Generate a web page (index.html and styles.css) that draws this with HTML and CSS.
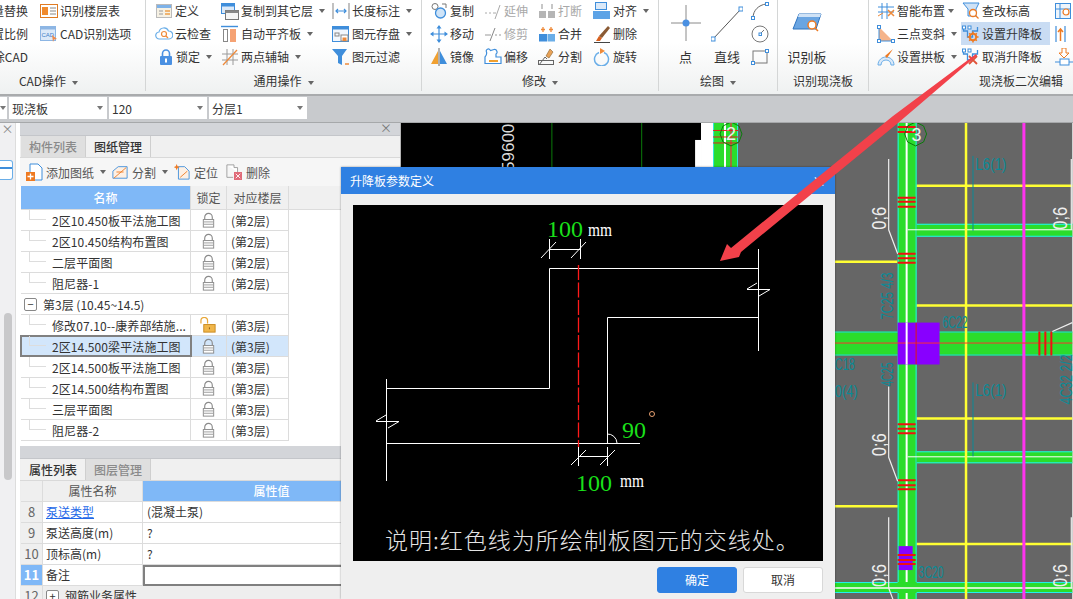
FILE: index.html
```html
<!DOCTYPE html>
<html>
    <head>
        <meta name="viewport" content="width=device-width, initial-scale=1">
        <meta charset="UTF-8">
        <title>升降板参数定义</title>
        <link rel="stylesheet" href="styles.css">
    </head>
    <body>
        <svg class="sprite">
            <defs>
                <g id="lock">
                    <path d="M5 8V5.500a4 4 0 0 1 8 0V8" fill="none" stroke="#8a8a8a" stroke-width="1.200"/>
                    <rect x="3.500" y="8" width="11" height="8" fill="#fff" stroke="#8a8a8a"/>
                    <path d="M4 10.500h10M4 13h10" stroke="#9a9a9a"/>
                </g>
                <g id="lift">
                    <path d="M1.500 2v4h4v6h5V6h5V2" fill="none" stroke="#3f8edb" stroke-width="1.300"/>
                    <rect x="0.500" y="1" width="3" height="3" fill="#fff" stroke="#3f8edb"/>
                    <rect x="6" y="1" width="3" height="3" fill="#fff" stroke="#3f8edb"/>
                </g>
            </defs>
        </svg>

        <div class="ribbon">
            <div class="group group-cad">
                <div class="group-body">
                    <div class="col col-cut">
                        <div class="item">批量替换</div>
                        <div class="item">设置比例</div>
                        <div class="item">清除CAD</div>
                    </div>
                    <div class="col">
                        <div class="item">
                            <svg class="ic" viewBox="0 0 18 18"><rect x="0.500" y="2.500" width="17" height="13" fill="#fff" stroke="#e07b22"/><rect x="2" y="5" width="6" height="8" fill="#f08a2c"/><path d="M10 6h6M10 9h6M10 12h6" stroke="#888"/></svg>
                            <span>识别楼层表</span>
                        </div>
                        <div class="item">
                            <svg class="ic" viewBox="0 0 18 18"><rect x="0.500" y="1.500" width="15" height="14" fill="#dce9f8" stroke="#8db6e4"/><rect x="0.500" y="1.500" width="15" height="3" fill="#8db6e4"/><text x="1.500" y="12" class="ic-text">CAD</text><path d="M12 10l5 4-3 .5-1 2.500z" fill="#f08a4a"/></svg>
                            <span>CAD识别选项</span>
                        </div>
                    </div>
                </div>
                <div class="group-label">CAD操作<i class="caret"></i></div>
            </div>

            <div class="group group-common">
                <div class="group-body">
                    <div class="col w66">
                        <div class="item">
                            <svg class="ic" viewBox="0 0 18 18"><rect x="1.500" y="2.500" width="15" height="13" fill="#f6f1e4" stroke="#bbb"/><rect x="2" y="3" width="14" height="3" fill="#7eb2e8"/><path d="M4 9h4M4 12h4" stroke="#999"/><path d="M10 9h5M10 12h5" stroke="#eda04a" stroke-width="1.500"/></svg>
                            <span>定义</span>
                        </div>
                        <div class="item">
                            <svg class="ic" viewBox="0 0 18 18"><path d="M4.500 14a3.500 3.500 0 0 1-.5-7 5 5 0 0 1 9.500-1 4 4 0 0 1 .5 8z" fill="#fff" stroke="#6aaee8" stroke-width="1.200"/><circle cx="9" cy="9" r="2.500" fill="none" stroke="#ee8a3a" stroke-width="1.200"/><path d="M11 11l2 2" stroke="#ee8a3a" stroke-width="1.200"/></svg>
                            <span>云检查</span>
                        </div>
                        <div class="item item-indent">
                            <svg class="ic ic-narrow" viewBox="0 0 14 18"><path d="M3.500 8V5.500a3.500 3.500 0 0 1 7 0V8" fill="none" stroke="#4a90e2" stroke-width="1.600"/><rect x="1" y="8" width="12" height="9" rx="1" fill="#4a90e2"/><rect x="6" y="10.500" width="2" height="4" fill="#fff"/></svg>
                            <span>锁定</span><i class="caret"></i>
                        </div>
                    </div>
                    <div class="col w111">
                        <div class="item">
                            <svg class="ic" viewBox="0 0 18 18"><rect x="0.500" y="1.500" width="13" height="10" fill="#dbe9f8" stroke="#3f8edb"/><rect x="0.500" y="1.500" width="13" height="3" fill="#3f8edb"/><rect x="4.500" y="8.500" width="13" height="9" fill="#f5f5f5" stroke="#777"/><rect x="4.500" y="8.500" width="13" height="2.500" fill="#888"/></svg>
                            <span>复制到其它层</span><i class="caret"></i>
                        </div>
                        <div class="item">
                            <svg class="ic" viewBox="0 0 18 18"><path d="M0 1.500h17" stroke="#3f8edb" stroke-width="1.400"/><rect x="2.500" y="4.500" width="4" height="12" fill="#fff" stroke="#888"/><rect x="9" y="4" width="6" height="13" fill="#f5a273"/></svg>
                            <span>自动平齐板</span><i class="caret"></i>
                        </div>
                        <div class="item">
                            <svg class="ic" viewBox="0 0 18 18"><path d="M1 6h16M1 12h16M6 1v16M12 1v16" stroke="#9a9a9a"/><path d="M2 17L16 2" stroke="#ee8a3a" stroke-width="1.300"/></svg>
                            <span>两点辅轴</span><i class="caret"></i>
                        </div>
                    </div>
                    <div class="col">
                        <div class="item">
                            <svg class="ic" viewBox="0 0 18 18"><path d="M1 1v16M17 1v16" stroke="#999" stroke-width="1.200"/><path d="M4 9h10M6 7L4 9l2 2M12 7l2 2-2 2" fill="none" stroke="#3f8edb" stroke-width="1.200"/></svg>
                            <span>长度标注</span><i class="caret"></i>
                        </div>
                        <div class="item">
                            <svg class="ic" viewBox="0 0 18 18"><rect x="0.500" y="1.500" width="16" height="15" fill="#f2f7fd" stroke="#3f8edb"/><rect x="0.500" y="1.500" width="16" height="3" fill="#3f8edb"/><rect x="3" y="8" width="4" height="3" fill="none" stroke="#888"/><rect x="9" y="10" width="7" height="6" fill="#fff" stroke="#888"/><rect x="10.500" y="12.500" width="4" height="3.500" fill="#ee8a3a"/></svg>
                            <span>图元存盘</span><i class="caret"></i>
                        </div>
                        <div class="item">
                            <svg class="ic" viewBox="0 0 18 18"><path d="M0 1h15l-5 7v9l-4-2V8z" fill="#3f8edb"/><path d="M13 16h4" stroke="#ee8a3a" stroke-width="1.500"/></svg>
                            <span>图元过滤</span>
                        </div>
                    </div>
                </div>
                <div class="group-label">通用操作<i class="caret"></i></div>
            </div>

            <div class="group group-modify">
                <div class="group-body">
                    <div class="col w54">
                        <div class="item">
                            <svg class="ic" viewBox="0 0 18 18"><circle cx="5" cy="4.500" r="3" fill="#fff" stroke="#777"/><circle cx="10.500" cy="11" r="5" fill="#cfe4f8" stroke="#3f8edb" stroke-width="1.300"/><path d="M12 2h4v4" fill="none" stroke="#777"/></svg>
                            <span>复制</span>
                        </div>
                        <div class="item">
                            <svg class="ic" viewBox="0 0 18 18"><path d="M9 1v16M1 9h16" stroke="#3f8edb" stroke-width="1.200"/><path d="M9 0l-2.500 3.500h5zM9 18l-2.500-3.500h5zM0 9l3.500-2.500v5zM18 9l-3.500-2.500v5z" fill="#3f8edb"/></svg>
                            <span>移动</span>
                        </div>
                        <div class="item">
                            <svg class="ic" viewBox="0 0 18 18"><path d="M8 3v13H1z" fill="#f0a030"/><path d="M10 3v13h7z" fill="#3f8edb"/><path d="M9 0v18" stroke="#666"/></svg>
                            <span>镜像</span>
                        </div>
                    </div>
                    <div class="col w54">
                        <div class="item item-off">
                            <svg class="ic" viewBox="0 0 18 18"><path d="M1 11h2M5 11h2M9 11h3" stroke="#aaa"/><path d="M11 17L16 3" stroke="#aaa"/></svg>
                            <span>延伸</span>
                        </div>
                        <div class="item item-off">
                            <svg class="ic" viewBox="0 0 18 18"><path d="M1 10h6M11 10h2M15 10h2" stroke="#999"/><path d="M6 16L11 3" stroke="#888"/></svg>
                            <span>修剪</span>
                        </div>
                        <div class="item">
                            <svg class="ic" viewBox="0 0 18 18"><path d="M6.500 2.500c-2-3-5-1-4 1.500C3 6 2 8 1 9v6.500h16V9h-5V6c2-1 1-5-2-4.500z" fill="#fff" stroke="#3f8edb" stroke-width="1.200"/><path d="M5 13h9" stroke="#f0a030" stroke-width="2"/></svg>
                            <span>偏移</span>
                        </div>
                    </div>
                    <div class="col w55">
                        <div class="item item-off">
                            <svg class="ic" viewBox="0 0 18 18"><rect x="1" y="9" width="7" height="7" fill="#b5b5b5"/><rect x="10" y="9" width="7" height="7" fill="#b5b5b5"/><path d="M4 2v5M14 2v5" stroke="#b5b5b5" stroke-width="1.500"/></svg>
                            <span>打断</span>
                        </div>
                        <div class="item">
                            <svg class="ic" viewBox="0 0 18 18"><rect x="1" y="9" width="8" height="7.500" fill="#3f8edb"/><rect x="9.500" y="9" width="7.500" height="7.500" fill="#6aaee8"/><path d="M5 2v5M3 4.500h4M13 2v5M11 4.500h4" stroke="#ee8a3a" stroke-width="1.300"/></svg>
                            <span>合并</span>
                        </div>
                        <div class="item">
                            <svg class="ic" viewBox="0 0 18 18"><path d="M12 1l3 3-4 6-3-2z" fill="#e8a258" stroke="#88602c" stroke-width=".6"/><rect x="0.500" y="12.500" width="15" height="4" fill="none" stroke="#666"/><path d="M1 17l6-8 2 2" fill="none" stroke="#666"/></svg>
                            <span>分割</span>
                        </div>
                    </div>
                    <div class="col">
                        <div class="item">
                            <svg class="ic" viewBox="0 0 18 18"><rect x="2.500" y="0.500" width="11" height="7" fill="#dbe9f8" stroke="#3f8edb"/><rect x="0" y="9" width="17" height="8" fill="#5da3e6"/></svg>
                            <span>对齐</span><i class="caret"></i>
                        </div>
                        <div class="item">
                            <svg class="ic" viewBox="0 0 18 18"><path d="M15 1l2 2-8 10-3-2z" fill="#8a5a34"/><path d="M6 11l3 2-2 3H3z" fill="#d8601e"/><path d="M1 17.500h16" stroke="#444"/></svg>
                            <span>删除</span>
                        </div>
                        <div class="item">
                            <svg class="ic" viewBox="0 0 18 18"><path d="M6 4.500a7 7 0 1 0 5 0" fill="none" stroke="#6aaee8" stroke-width="1.500"/><path d="M7 0v6l5-3z" fill="#ee8a3a"/></svg>
                            <span>旋转</span>
                        </div>
                    </div>
                </div>
                <div class="group-label">修改<i class="caret"></i></div>
            </div>

            <div class="group group-draw">
                <div class="group-body">
                    <div class="tool w53">
                        <svg class="ic-big" viewBox="0 0 32 38"><path d="M16 1v36M1 19h30" stroke="#8a8a8a"/><circle cx="16" cy="19" r="3.500" fill="#4a90e2"/></svg>
                        <span>点</span>
                    </div>
                    <div class="tool w40">
                        <svg class="ic-big" viewBox="0 0 32 38"><path d="M2 35L30 5" stroke="#555"/><rect x="0" y="33" width="4" height="4" fill="#fff" stroke="#3f8edb"/><rect x="28" y="3" width="4" height="4" fill="#fff" stroke="#3f8edb"/></svg>
                        <span>直线</span>
                    </div>
                    <div class="col col-shapes">
                        <div class="item">
                            <svg class="ic" viewBox="0 0 18 18"><path d="M2 16C2 8 8 3 15 2" fill="none" stroke="#666"/><rect x="0.500" y="14.500" width="3" height="3" fill="#fff" stroke="#3f8edb"/><rect x="14.500" y="0.500" width="3" height="3" fill="#fff" stroke="#3f8edb"/></svg>
                        </div>
                        <div class="item">
                            <svg class="ic" viewBox="0 0 18 18"><circle cx="9" cy="9" r="8" fill="#fff" stroke="#777"/><path d="M9 9l4-4" stroke="#777"/><rect x="8" y="8" width="2.500" height="2.500" fill="#fff" stroke="#3f8edb"/></svg>
                        </div>
                        <div class="item">
                            <svg class="ic" viewBox="0 0 18 18"><rect x="2" y="3" width="14" height="12" fill="none" stroke="#777"/><rect x="0.500" y="13.500" width="3" height="3" fill="#fff" stroke="#3f8edb"/><rect x="14.500" y="1.500" width="3" height="3" fill="#fff" stroke="#3f8edb"/></svg>
                        </div>
                    </div>
                </div>
                <div class="group-label">绘图<i class="caret"></i></div>
            </div>

            <div class="group group-read">
                <div class="group-body">
                    <div class="tool tool-read">
                        <svg class="ic-read" viewBox="0 0 30 20"><path d="M7 1h22l-5 15H1z" fill="#6aa5e2" stroke="#2f74c0"/><path d="M7 1h22l-1 3H6z" fill="#cfe2f6"/><circle cx="20" cy="12" r="4" fill="#fff" stroke="#ee7a22" stroke-width="1.500"/><path d="M23 15l3 3" stroke="#ee7a22" stroke-width="1.500"/></svg>
                        <span>识别板</span>
                    </div>
                </div>
                <div class="group-label">识别现浇板</div>
            </div>

            <div class="group group-edit">
                <div class="group-body">
                    <div class="col w85">
                        <div class="item">
                            <svg class="ic" viewBox="0 0 18 18"><path d="M5 1v16M10 1v16M1 5h16M1 10h16" stroke="#3f8edb"/><path d="M11 8l6 6M17 8l-6 6" stroke="#ee8a3a" stroke-width="1.500"/><path d="M1 14l5-3" stroke="#ee8a3a"/></svg>
                            <span>智能布置</span><i class="caret caret-tight"></i>
                        </div>
                        <div class="item">
                            <svg class="ic" viewBox="0 0 18 18"><path d="M2 2v14h14z" fill="#f5b48a"/><path d="M2 2v14h14" fill="none" stroke="#3f8edb"/><rect x="0.500" y="0.500" width="3" height="3" fill="#fff" stroke="#3f8edb"/><rect x="0.500" y="14.500" width="3" height="3" fill="#fff" stroke="#3f8edb"/><rect x="14.500" y="14.500" width="3" height="3" fill="#fff" stroke="#3f8edb"/></svg>
                            <span>三点变斜</span><i class="caret"></i>
                        </div>
                        <div class="item">
                            <svg class="ic" viewBox="0 0 18 18"><path d="M1 17c0-5 4-8 8-8s8 3 8 8h-3c0-3-2-5-5-5s-5 2-5 5z" fill="#dbe9f8" stroke="#6aaee8"/><path d="M16 1L8 8l2 2z" fill="#ee7a22"/></svg>
                            <span>设置拱板</span><i class="caret"></i>
                        </div>
                    </div>
                    <div class="col w93">
                        <div class="item">
                            <svg class="ic" viewBox="0 0 18 18"><path d="M1 1h16l-3 6v7H6V7z" fill="#cfe2f6" stroke="#3f8edb"/><circle cx="11" cy="11" r="3.500" fill="#fff" stroke="#ee7a22" stroke-width="1.300"/><path d="M13.500 13.500l3 3" stroke="#ee7a22" stroke-width="1.300"/></svg>
                            <span>查改标高</span>
                        </div>
                        <div class="item item-hot">
                            <svg class="ic" viewBox="0 0 18 18"><use href="#lift"/><circle cx="11" cy="12" r="3.200" fill="none" stroke="#ee7a22" stroke-width="2"/><path d="M11 6.500v2M11 15.500v2M5.500 12h2M14.500 12h2M7.200 8.200l1.400 1.400M13.400 14.400l1.400 1.400M7.200 15.800l1.400-1.400M13.400 9.600l1.400-1.400" stroke="#ee7a22" stroke-width="1.500"/></svg>
                            <span>设置升降板</span>
                        </div>
                        <div class="item">
                            <svg class="ic" viewBox="0 0 18 18"><use href="#lift"/><path d="M7 8l8 8M15 8l-8 8" stroke="#e0533a" stroke-width="1.800"/></svg>
                            <span>取消升降板</span>
                        </div>
                    </div>
                    <div class="col">
                        <div class="item">
                            <svg class="ic" viewBox="0 0 18 18"><rect x="0.500" y="1.500" width="15" height="15" fill="#eef5fc" stroke="#3f8edb"/><path d="M5 2v14M1 7h14" stroke="#3f8edb"/><circle cx="11" cy="10" r="3" fill="#fff" stroke="#ee7a22" stroke-width="1.200"/></svg>
                        </div>
                        <div class="item">
                            <svg class="ic" viewBox="0 0 18 18"><path d="M1 1v16M10 1v16" stroke="#3f8edb" stroke-width="1.200"/><path d="M5.500 16V4M3 7l2.500-3L8 7" fill="none" stroke="#ee7a22" stroke-width="1.500"/></svg>
                        </div>
                        <div class="item">
                            <svg class="ic" viewBox="0 0 18 18"><path d="M7 0v5H4l5 5 5-5h-3V0z" fill="#fff" stroke="#ee7a22"/><rect x="5" y="11" width="9" height="6" fill="#fff" stroke="#3f8edb"/><path d="M0 14h5M14 14h4" stroke="#3f8edb"/></svg>
                        </div>
                    </div>
                </div>
                <div class="group-label">现浇板二次编辑</div>
            </div>
        </div>

        <div class="combos">
            <div class="combo combo-cut"><i class="caret"></i></div>
            <div class="combo">现浇板<i class="caret"></i></div>
            <div class="combo">120<i class="caret"></i></div>
            <div class="combo">分层1<i class="caret"></i></div>
        </div>

        <div class="main">
            <div class="strip">
                <span class="strip-close">×</span>
                <div class="strip-icon"></div>
                <div class="strip-thumb"></div>
            </div>
            <div class="panels">
                <div class="panel panel-top">
                    <div class="panel-head"><span class="panel-close">×</span></div>
                    <div class="tabs">
                        <span class="tab">构件列表</span>
                        <span class="tab tab-on">图纸管理</span>
                    </div>
                    <div class="bar">
                        <span class="bar-btn">
                            <svg class="ic" viewBox="0 0 18 18"><path d="M4 1h8l4 4v12H4z" fill="#fff" stroke="#3f8edb"/><rect x="0" y="9" width="9" height="9" fill="#ee7a22"/><path d="M4.500 10.500v6M1.500 13.500h6" stroke="#fff" stroke-width="1.300"/></svg>
                            添加图纸<i class="caret"></i>
                        </span>
                        <span class="bar-btn">
                            <svg class="ic ic-wide" viewBox="0 0 18 18"><path d="M1 8l6-5h10v13H1z" fill="#fdf0e4" stroke="#3f8edb"/><path d="M2 16L16 4M5 9h8" stroke="#ee7a22"/></svg>
                            分割<i class="caret"></i>
                        </span>
                        <span class="bar-btn">
                            <svg class="ic ic-wide" viewBox="0 0 18 18"><path d="M5 3h7l5 5v9H5z" fill="#fdf0e4" stroke="#3f8edb"/><path d="M3 0l1 2.500L6.500 3.500 4 4.500 3 7 2 4.500-.500 3.500 2 2.500z" fill="#ee7a22"/><path d="M7 15L15 8" stroke="#ee7a22"/></svg>
                            定位
                        </span>
                        <span class="bar-btn bar-last">
                            <svg class="ic ic-wide" viewBox="0 0 18 18"><path d="M1 1h8v3h4v5" fill="#fff" stroke="#999"/><path d="M1 1v14h7" fill="none" stroke="#999"/><rect x="9" y="9" width="9" height="9" fill="#e06a78"/><path d="M11 11l5 5M16 11l-5 5" stroke="#fff"/></svg>
                            删除
                        </span>
                    </div>
                    <div class="drawings">
                        <div class="draw-row draw-head">
                            <span class="cell cell-name cell-blue">名称</span>
                            <span class="cell cell-lock cell-grey">锁定</span>
                            <span class="cell cell-floor cell-grey">对应楼层</span>
                        </div>
                        <div class="draw-row">
                            <span class="cell cell-name cell-tree">2区10.450板平法施工图</span>
                            <span class="cell cell-lock"><svg class="lock" viewBox="0 0 18 18"><use href="#lock"/></svg></span>
                            <span class="cell cell-floor">(第2层)</span>
                        </div>
                        <div class="draw-row">
                            <span class="cell cell-name cell-tree">2区10.450结构布置图</span>
                            <span class="cell cell-lock"><svg class="lock" viewBox="0 0 18 18"><use href="#lock"/></svg></span>
                            <span class="cell cell-floor">(第2层)</span>
                        </div>
                        <div class="draw-row">
                            <span class="cell cell-name cell-tree">二层平面图</span>
                            <span class="cell cell-lock"><svg class="lock" viewBox="0 0 18 18"><use href="#lock"/></svg></span>
                            <span class="cell cell-floor">(第2层)</span>
                        </div>
                        <div class="draw-row">
                            <span class="cell cell-name cell-tree">阻尼器-1</span>
                            <span class="cell cell-lock"><svg class="lock" viewBox="0 0 18 18"><use href="#lock"/></svg></span>
                            <span class="cell cell-floor">(第2层)</span>
                        </div>
                        <div class="draw-row">
                            <span class="cell cell-floorname"><i class="toggle">−</i>第3层 (10.45~14.5)</span>
                        </div>
                        <div class="draw-row">
                            <span class="cell cell-name cell-tree">修改07.10--康养部结施...</span>
                            <span class="cell cell-lock">
                                <svg class="lock" viewBox="0 0 18 18"><path d="M1 7V4a3.500 3.500 0 0 1 7 0v3" fill="none" stroke="#e8a83a" stroke-width="1.300"/><rect x="4" y="8" width="12" height="8" fill="#f0b64a" stroke="#c98a20"/><path d="M10 11v2" stroke="#8a5a10"/></svg>
                            </span>
                            <span class="cell cell-floor">(第3层)</span>
                        </div>
                        <div class="draw-row draw-on">
                            <span class="cell cell-name cell-tree cell-focus">2区14.500梁平法施工图</span>
                            <span class="cell cell-lock"><svg class="lock" viewBox="0 0 18 18"><use href="#lock"/></svg></span>
                            <span class="cell cell-floor">(第3层)</span>
                        </div>
                        <div class="draw-row">
                            <span class="cell cell-name cell-tree">2区14.500板平法施工图</span>
                            <span class="cell cell-lock"><svg class="lock" viewBox="0 0 18 18"><use href="#lock"/></svg></span>
                            <span class="cell cell-floor">(第3层)</span>
                        </div>
                        <div class="draw-row">
                            <span class="cell cell-name cell-tree">2区14.500结构布置图</span>
                            <span class="cell cell-lock"><svg class="lock" viewBox="0 0 18 18"><use href="#lock"/></svg></span>
                            <span class="cell cell-floor">(第3层)</span>
                        </div>
                        <div class="draw-row">
                            <span class="cell cell-name cell-tree">三层平面图</span>
                            <span class="cell cell-lock"><svg class="lock" viewBox="0 0 18 18"><use href="#lock"/></svg></span>
                            <span class="cell cell-floor">(第3层)</span>
                        </div>
                        <div class="draw-row">
                            <span class="cell cell-name cell-tree">阻尼器-2</span>
                            <span class="cell cell-lock"><svg class="lock" viewBox="0 0 18 18"><use href="#lock"/></svg></span>
                            <span class="cell cell-floor">(第3层)</span>
                        </div>
                    </div>
                </div>
                <div class="panel panel-bottom">
                    <div class="panel-head"></div>
                    <div class="tabs">
                        <span class="tab tab-on">属性列表</span>
                        <span class="tab">图层管理</span>
                    </div>
                    <div class="props">
                        <div class="prop-row prop-head">
                            <span class="prop-no"></span>
                            <span class="prop-name">属性名称</span>
                            <span class="prop-value prop-blue">属性值</span>
                        </div>
                        <div class="prop-row">
                            <span class="prop-no">8</span>
                            <span class="prop-name prop-link">泵送类型</span>
                            <span class="prop-value">(混凝土泵)</span>
                        </div>
                        <div class="prop-row">
                            <span class="prop-no">9</span>
                            <span class="prop-name">泵送高度(m)</span>
                            <span class="prop-value">?</span>
                        </div>
                        <div class="prop-row">
                            <span class="prop-no">10</span>
                            <span class="prop-name">顶标高(m)</span>
                            <span class="prop-value">?</span>
                        </div>
                        <div class="prop-row">
                            <span class="prop-no prop-no-on">11</span>
                            <span class="prop-name">备注</span>
                            <span class="prop-value prop-focus"></span>
                        </div>
                        <div class="prop-row prop-more">
                            <span class="prop-no">12</span>
                            <span class="prop-group"><i class="toggle">+</i>钢筋业务属性</span>
                        </div>
                    </div>
                </div>
            </div>

            <svg class="cad" viewBox="400 122 673 477">
                <rect x="400" y="122" width="301" height="477" fill="#000"/>
                <rect x="701" y="122" width="12" height="477" fill="#fff"/>
                <rect x="695" y="139" width="6" height="460" fill="#fff"/>
                <rect x="738" y="122" width="335" height="477" fill="#666"/>
                <path d="M551.500 122v45M641.500 122v45" stroke="#0a7a0a"/>
                <text class="cad-dim" transform="translate(514 170) rotate(-90)">59600</text>

                <!-- axis 2 -->
                <rect x="713" y="122" width="25" height="60" fill="#2bdc2b"/>
                <path d="M713.500 122v60M737.500 122v60" stroke="#2fe8e0"/>
                <path d="M725 122v60" stroke="#fff" stroke-width="2"/>
                <path d="M731 122v60" stroke="#a0703a" stroke-width="2"/>
                <path d="M713 129.500h25M713 136h25M713 142h25" stroke="#e02020"/>
                <path d="M731 121l8 4 3 8-3 8-8 4-8-4-3-8 3-8z" fill="none" stroke="#0a7a0a"/>
                <text class="cad-axis" x="731" y="139">2</text>

                <!-- grid lines -->
                <path d="M908 185h165M835 261h63M908 305h165M908 418h165M835 506h71M908 544h165" stroke="#ffff33" stroke-width="2.500"/>

                <!-- beams -->
                <rect x="898" y="122" width="19" height="477" fill="#2bdc2b"/>
                <path d="M898.500 122v477M916.500 122v477" stroke="#22f0f0"/>
                <path d="M907 122v477" stroke="#fff" stroke-width="2"/>
                <rect x="917" y="223" width="156" height="13" fill="#2bdc2b"/>
                <path d="M917 223.500h156M917 235.500h156" stroke="#22f0f0"/>
                <path d="M908 229h165" stroke="#fff"/>
                <rect x="917" y="451" width="156" height="12" fill="#2bdc2b"/>
                <path d="M917 451.500h156M917 462.500h156" stroke="#22f0f0"/>
                <path d="M908 456.500h165" stroke="#fff"/>
                <rect x="835" y="331" width="238" height="24" fill="#2bdc2b"/>
                <path d="M835 331.500h238M835 354.500h238" stroke="#22d8d8"/>
                <rect x="835" y="582" width="238" height="11" fill="#2bdc2b"/>
                <path d="M835 582.500h63M917 582.500h156M835 592.500h63M917 592.500h156" stroke="#22f0f0"/>
                <path d="M835 588h238" stroke="#fff" stroke-width="1.500"/>
                <path d="M966.500 122v477" stroke="#ffff33" stroke-width="2.500"/>
                <path d="M1024.500 122v477" stroke="#ff33ee" stroke-width="3"/>

                <!-- columns -->
                <rect x="898" y="322" width="42" height="42" fill="#8800ff"/>
                <path d="M835 342.500h238" stroke="#ff3030"/>
                <path d="M907 322v42" stroke="#fff" stroke-width="2"/>
                <path d="M916.500 322v42" stroke="#e01818"/>
                <rect x="899" y="546" width="14" height="24" fill="#8800ff"/>

                <!-- rebar ticks -->
                <path d="M898 126h18M898 131h18M898 197h18M898 201h18M898 206h18M898 253h18M898 257.500h18M898 262h18M898 424h18M898 428.500h18M898 433h18M898 480h18M898 485h18M898 489h18M898 555h18M898 560h18M898 564h18" stroke="#f01010" stroke-width="2"/>
                <path d="M1040 331v24M1046 331v24M1052 331v24" stroke="#f01010" stroke-width="2"/>

                <!-- axis 3 -->
                <path d="M916 121l8 4 3 8-3 8-8 4-8-4-3-8 3-8z" fill="none" stroke="#0a7a0a"/>
                <text class="cad-axis" x="917" y="140">3</text>

                <!-- leaders -->
                <path d="M889 158v71l9 24M889 386v71l9 24M889 517v71l9 24M1072 158v71M1072 517v71M1053 331l20-9" fill="none" stroke="#eee" stroke-width="1.200"/>
                <path d="M973.500 155v75M973.500 382v74" stroke="#0a8a96"/>

                <!-- labels -->
                <text class="cad-label" x="976" y="169" textLength="31" lengthAdjust="spacingAndGlyphs">L6(1)</text>
                <text class="cad-label" x="976" y="396" textLength="31" lengthAdjust="spacingAndGlyphs">L6(1)</text>
                <text class="cad-label" x="943" y="327" textLength="25" lengthAdjust="spacingAndGlyphs">6C22</text>
                <text class="cad-label" x="919" y="578" textLength="25" lengthAdjust="spacingAndGlyphs">3C20</text>
                <text class="cad-label" x="835" y="370" textLength="20" lengthAdjust="spacingAndGlyphs">C18</text>
                <text class="cad-label" x="835" y="397" textLength="23" lengthAdjust="spacingAndGlyphs">0(4)</text>
                <text class="cad-label" transform="translate(893 319) rotate(-90)" textLength="47" lengthAdjust="spacingAndGlyphs">7C25 4/3</text>
                <text class="cad-label" transform="translate(893 386) rotate(-90)" textLength="24" lengthAdjust="spacingAndGlyphs">4C25</text>
                <text class="cad-label" transform="translate(1073 404) rotate(-90)" textLength="50" lengthAdjust="spacingAndGlyphs">4C32 2/2</text>
                <text class="cad-ratio" transform="translate(886 229) rotate(-90)" textLength="23" lengthAdjust="spacingAndGlyphs">0;6</text>
                <text class="cad-ratio" transform="translate(886 456) rotate(-90)" textLength="23" lengthAdjust="spacingAndGlyphs">0;6</text>
                <text class="cad-ratio" transform="translate(886 587) rotate(-90)" textLength="23" lengthAdjust="spacingAndGlyphs">0;6</text>
                <text class="cad-ratio" transform="translate(1068 229) rotate(-90)" textLength="23" lengthAdjust="spacingAndGlyphs">0;6</text>
                <text class="cad-ratio" transform="translate(1068 587) rotate(-90)" textLength="23" lengthAdjust="spacingAndGlyphs">0;6</text>
            </svg>
        </div>

        <div class="dialog">
            <div class="dialog-title">升降板参数定义<span class="dialog-close">×</span></div>
            <svg class="sketch" viewBox="353 205 470 356">
                <rect x="353" y="205" width="470" height="356" fill="#000"/>
                <g fill="none" stroke="#fff">
                    <path d="M386 388.500h163.500V268.500H759"/>
                    <path d="M386.500 379v102M386 443.500h254M607.500 443V317.500H758M758.500 249v102"/>
                    <path d="M376 421l10-6M376 421.500h23l-11 6.500M747 289l10-6M747 289.500h23l-11 6.500"/>
                    <path d="M549.500 239v20M580.500 239v20M549 249.500h31M541 258l15-16M571 258l15-16"/>
                    <path d="M578.500 447v19M607.500 447v19M578 456.500h29M571 465l15-15M600 465l15-15"/>
                    <path d="M607 434a9.500 9.500 0 0 1 10 9"/>
                </g>
                <path d="M578.500 265v182" stroke="#ff1a1a" stroke-width="1.300" stroke-dasharray="15 2.500"/>
                <text class="sk-num" x="547" y="237">100</text>
                <text class="sk-unit" x="588" y="236" textLength="24" lengthAdjust="spacingAndGlyphs">mm</text>
                <text class="sk-num" x="576" y="491">100</text>
                <text class="sk-unit" x="620" y="487" textLength="24" lengthAdjust="spacingAndGlyphs">mm</text>
                <text class="sk-num" x="622" y="438">90</text>
                <circle cx="652" cy="414" r="2.500" fill="none" stroke="#e8a070"/>
                <text class="sk-note" x="385" y="549">说明:红色线为所绘制板图元的交线处。</text>
            </svg>
            <div class="dialog-actions">
                <span class="btn btn-ok">确定</span>
                <span class="btn">取消</span>
            </div>
        </div>

        <svg class="arrow" viewBox="0 0 1073 599">
            <path d="M720 261L727 244L731 248L893 116L976 54L977 55.500L898 123L741 252L739 257z" fill="#f2414a"/>
        </svg>
    </body>
</html>
```

FILE: styles.css
```css
html, body {
    margin: 0;
    height: 100%;
    overflow: hidden;

    font-family: "Noto Sans CJK SC", "Noto Sans", sans-serif;
    font-size: 12px;
    color: #333;
}

body {
    display: flex;
    flex-direction: column;
    position: relative;
}

.sprite {
    width: 0;
    height: 0;
    position: absolute;
}

.caret {
    display: inline-block;
    width: 0;
    height: 0;
    margin-left: 6px;
    border-left: 3.5px solid transparent;
    border-right: 3.5px solid transparent;
    border-top: 4px solid #666;
    vertical-align: middle;
}

.caret-tight {
    margin-left: 3px;
}

/* ribbon */
.ribbon {
    display: flex;
    height: 94px;
    flex: none;
    background: linear-gradient(#fff 45%, #eff1f1);
    border-bottom: 2px solid #a9abad;
}

.group {
    display: flex;
    flex-direction: column;
    flex: none;
    height: 91px;
    border-right: 1px solid #d4d6d6;
    box-sizing: border-box;
}

.group-cad { width: 146px; }
.group-common { width: 276px; }
.group-modify { width: 237px; }
.group-draw { width: 119px; }
.group-read { width: 91px; }
.group-edit { width: 204px; border-right: 0; }

.group-body {
    display: flex;
    height: 70px;
    margin-top: -1px;
}

.group-common .group-body { padding-left: 9px; }
.group-modify .group-body { padding-left: 8px; }
.group-edit .group-body { padding-left: 8px; }

.group-label {
    height: 22px;
    line-height: 24px;
    text-align: center;
    white-space: nowrap;
}

.group-cad .group-label {
    width: 97px;
}

.group-edit .group-label {
    text-align: right;
    padding-right: 10px;
}

.col {
    display: flex;
    flex-direction: column;
    flex: none;
}

.col-cut {
    width: 28px;
    margin-right: 12px;
    overflow: hidden;
    align-items: flex-end;
}

.w54 { width: 54px; }
.w55 { width: 55px; }
.w66 { width: 66px; }
.w85 { width: 85px; }
.w93 { width: 93px; }
.w111 { width: 111px; }

.item {
    display: flex;
    align-items: center;
    height: 23px;
    flex: none;
    white-space: nowrap;
}

.item-off {
    color: #a8a8a8;
}

.item-indent {
    padding-left: 4px;
}

.item-hot {
    background-color: #c9dcf3;
    margin: 0 5px 0 -1px;
    padding-left: 1px;
}

.ic {
    width: 18px;
    height: 18px;
    flex: none;
    margin-right: 2px;
}

.ic-narrow {
    width: 14px;
    margin-right: 3px;
}

.ic-text {
    font-family: "Liberation Sans", sans-serif;
    font-size: 6px;
    fill: #3f7fc8;
}

.tool {
    display: flex;
    flex-direction: column;
    align-items: center;
    flex: none;
    font-size: 13px;
}

.w53 { width: 53px; }
.w40 { width: 40px; margin-left: -5px; }

.ic-big {
    width: 32px;
    height: 38px;
    margin: 5px 0 5px;
}

.col-shapes {
    margin-left: 4px;
}

.tool-read {
    width: 36px;
    margin-left: 11px;
    white-space: nowrap;
}

.ic-read {
    width: 30px;
    height: 20px;
    margin: 14px 0 14px;
}

/* combo row */
.combos {
    display: flex;
    gap: 2px;
    height: 26px;
    flex: none;
    box-sizing: border-box;
    padding-top: 1px;
    background-color: #c8cacd;
}

.combo {
    display: flex;
    align-items: center;
    justify-content: space-between;
    box-sizing: border-box;
    width: 98px;
    height: 22px;
    padding: 0 4px 0 3px;
    background-color: #fff;
    font-size: 12px;
}

.combo-cut {
    width: 7px;
    padding: 0;
    overflow: hidden;
    justify-content: flex-end;
}

.combo-cut .caret {
    flex: none;
    margin: 0 1px 0 0;
}

.combo .caret {
    border-top-color: #777;
}

/* left side */
.main {
    display: flex;
    flex: 1;
    min-height: 0;
    border-top: 1px solid #a6a8aa;
}

.strip {
    display: flex;
    flex-direction: column;
    width: 16px;
    flex: none;
    box-sizing: border-box;
    background-color: #f0f0f2;
    border-right: 1px solid #ddd;
}

.strip-close {
    height: 12px;
    line-height: 12px;
    text-align: center;
    font-size: 12px;
    color: #888;
}

.strip-icon {
    width: 13px;
    height: 20px;
    margin-top: 25px;
    box-sizing: border-box;
    background: linear-gradient(#fff 6px, #3f8edb 6px, #3f8edb 8px, #fff 8px);
    border: 1px solid #6aaee8;
    border-left: 0;
    border-radius: 0 3px 3px 0;
}

.strip-thumb {
    width: 8px;
    height: 167px;
    margin: 133px 0 0 4px;
    background-color: #c8c8ca;
    border-radius: 4px;
}

.panels {
    display: flex;
    flex-direction: column;
    width: 384px;
    flex: none;
    box-sizing: border-box;
    padding-left: 4px;
    background-color: #fff;
}

.panel-top {
    height: 323px;
}

.panel-bottom {
    flex: 1;
    min-height: 0;
    overflow: hidden;
    background-color: #eee;
}

.panel-head {
    position: relative;
    height: 12px;
    background-color: #d3d5d9;
    border-bottom: 1px solid #c4c6ca;
}

.panel-close {
    position: absolute;
    right: 8px;
    top: -1px;
    line-height: 12px;
    color: #777;
}

.tabs {
    display: flex;
    height: 22px;
    box-sizing: border-box;
    padding-left: 1px;
    background-color: #f0f0f0;
    border-bottom: 1px solid #d9d9d9;
}

.tab {
    width: 64px;
    line-height: 21px;
    text-align: center;
    background-color: #dfdfdf;
    border-right: 1px solid #cfcfcf;
    color: #8a8a8a;
    font-weight: 500;
}

.tab-on {
    background-color: #f1f1f1;
    color: #333;
}

.bar {
    display: flex;
    align-items: center;
    gap: 6px;
    height: 28px;
    padding-left: 6px;
    background-color: #f6f6f6;
}

.bar-btn {
    display: flex;
    align-items: center;
    white-space: nowrap;
    color: #555;
}

.bar-last {
    margin-left: 2px;
}

.bar-btn .ic {
    margin-right: 2px;
}

.bar-btn .ic-wide {
    width: 16px;
    height: 16px;
    margin-right: 4px;
}

.draw-row {
    display: flex;
    height: 21px;
    box-sizing: border-box;
    width: 268px;
    margin-left: 1px;
    border-bottom: 1px solid #dcdcdc;
}

.draw-head {
    width: 379px;
    height: 24px;
    background-color: #f0f0f0;
}

.cell {
    display: flex;
    align-items: center;
    box-sizing: border-box;
    border-right: 1px solid #dcdcdc;
    white-space: nowrap;
}

.cell-name { width: 170px; }
.cell-lock { width: 36px; justify-content: center; }
.cell-floor { width: 62px; padding-left: 4px; }

.cell-floorname {
    width: 268px;
    padding-left: 3px;
    border-right: 1px solid #dcdcdc;
}

.cell-blue {
    justify-content: center;
    background-color: #7fb8f7;
    color: #fff;
    font-weight: 500;
}

.cell-grey {
    justify-content: center;
    padding-left: 0;
    color: #555;
}

.cell-tree {
    position: relative;
    padding-left: 31px;
    letter-spacing: 0.1px;
}

.cell-tree::before {
    content: "";
    position: absolute;
    left: 8px;
    top: 0;
    bottom: 10px;
    width: 16px;
    border-left: 1px solid #ddd;
    border-bottom: 1px solid #ddd;
}

.draw-on {
    background-color: #d2e6fb;
}

.cell-focus {
    outline: 2px solid #808080;
    outline-offset: -1px;
}

.lock {
    width: 17px;
    height: 17px;
}

.toggle {
    display: inline-block;
    width: 11px;
    height: 11px;
    margin-right: 6px;
    line-height: 10px;
    text-align: center;
    font-style: normal;
    font-size: 11px;
    border: 1px solid #888;
    border-radius: 2px;
    background-color: #fff;
}

.props {
    margin-left: 1px;
}

.prop-row {
    display: flex;
    height: 21px;
    box-sizing: border-box;
    background-color: #fff;
    border-bottom: 1px solid #dcdcdc;
}

.prop-head {
    background-color: #efefef;
}

.prop-no {
    width: 22px;
    flex: none;
    box-sizing: border-box;
    line-height: 20px;
    text-align: center;
    font-size: 13px;
    color: #666;
    background-color: #efefef;
    border-right: 1px solid #dcdcdc;
}

.prop-no-on {
    background-color: #7fb8f7;
    color: #fff;
    font-weight: 600;
}

.prop-name {
    width: 100px;
    flex: none;
    box-sizing: border-box;
    padding-left: 3px;
    line-height: 20px;
    border-right: 1px solid #dcdcdc;
}

.prop-head .prop-name {
    text-align: center;
    padding-left: 0;
    color: #555;
}

.prop-link {
    color: #2468e8;
    text-decoration: underline;
}

.prop-value {
    flex: 1;
    box-sizing: border-box;
    padding-left: 4px;
    line-height: 20px;
}

.prop-blue {
    padding-left: 0;
    text-align: center;
    background-color: #7fb8f7;
    color: #fff;
    font-weight: 500;
}

.prop-focus {
    border: 2px solid #808080;
    border-right: 0;
    margin-bottom: -1px;
}

.prop-more {
    background-color: #eee;
}

.prop-group {
    padding-left: 3px;
    line-height: 20px;
}

/* drawing canvas */
.cad {
    flex: 1;
    min-width: 0;
    display: block;
    background-color: #fff;
}

.cad-dim {
    font-family: "Liberation Sans", sans-serif;
    font-size: 17px;
    fill: #ddd;
}

.cad-axis {
    font-family: "Liberation Sans", sans-serif;
    font-size: 18px;
    text-anchor: middle;
    fill: #eee;
}

.cad-label {
    font-family: "Liberation Sans", sans-serif;
    font-size: 17px;
    fill: #0a8a96;
}

.cad-ratio {
    font-family: "Liberation Sans", sans-serif;
    font-size: 20px;
    fill: #eee;
}

/* dialog over the drawing */
.dialog {
    position: absolute;
    left: 341px;
    top: 167px;
    width: 494px;
    height: 432px;
    background-color: #efefef;
    box-shadow: 0 0 2px rgba(0, 0, 0, 0.4);
}

.dialog-title {
    position: relative;
    height: 27px;
    padding-left: 9px;
    line-height: 27px;
    color: #fff;
    background-color: #2f80e2;
}

.dialog-close {
    position: absolute;
    right: 9px;
    top: 0;
    font-size: 14px;
}

.sketch {
    display: block;
    width: 470px;
    height: 356px;
    margin: 11px 0 0 12px;
}

.sk-num {
    font-family: "Liberation Serif", serif;
    font-size: 24px;
    fill: #1adf1a;
}

.sk-unit {
    font-family: "Liberation Serif", serif;
    font-size: 19px;
    fill: #fff;
}

.sk-note {
    font-family: "Noto Sans CJK SC", sans-serif;
    font-size: 23px;
    font-weight: 300;
    letter-spacing: 1px;
    fill: #e4e4e4;
}

.dialog-actions {
    display: flex;
    justify-content: flex-end;
    gap: 6px;
    padding: 6px 12px 0 0;
}

.btn {
    width: 80px;
    height: 26px;
    box-sizing: border-box;
    line-height: 24px;
    text-align: center;
    background-color: #fff;
    border: 1px solid #d8d8d8;
    border-radius: 3px;
}

.btn-ok {
    background-color: #2f80e2;
    border-color: #2f80e2;
    color: #fff;
}

.arrow {
    position: absolute;
    left: 0;
    top: 0;
    width: 1073px;
    height: 599px;
    pointer-events: none;
}
```
